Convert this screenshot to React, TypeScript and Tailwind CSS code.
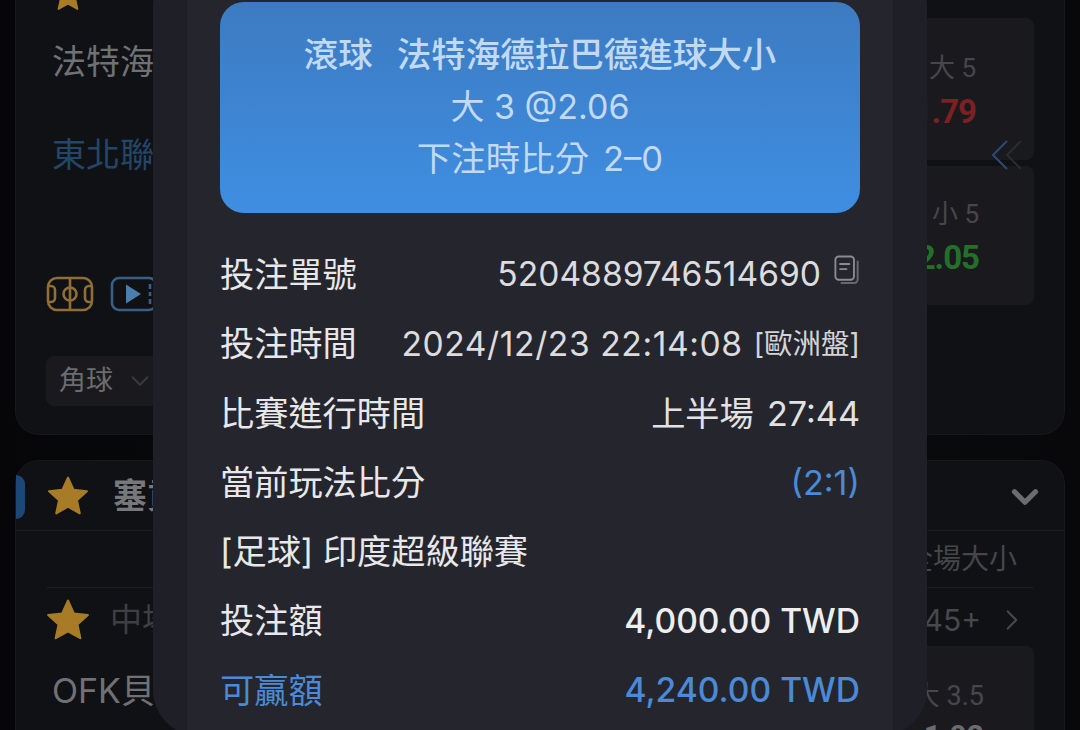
import { ChevronDown, ChevronRight } from 'lucide-react'

const cjk = { fontFamily: 'Inter, "Noto Sans CJK TC", sans-serif' }

const Star = ({ className }: { className: string }) => (
  <svg viewBox="0 0 24 24" className={className} fill="#a87c27">
    <path d="M12 1.500l3.200 7 7.600.8-5.700 5.100 1.600 7.500L12 18.100l-6.700 3.800 1.600-7.500L1.200 9.300l7.600-.8z" strokeLinejoin="round" stroke="#a87c27" strokeWidth="1.200" />
  </svg>
)

const PitchIcon = () => (
  <svg viewBox="0 0 48 36" className="w-[48px] h-[36px]" fill="none" stroke="#8f6e37" strokeWidth="2.600">
    <rect x="2" y="2" width="44" height="32" rx="9" />
    <path d="M24 2v32" />
    <circle cx="24" cy="18" r="6.500" />
    <path d="M2 10h3a4 4 0 0 1 4 4v8a4 4 0 0 1-4 4H2M46 10h-3a4 4 0 0 0-4 4v8a4 4 0 0 0 4 4h3" />
  </svg>
)

const VideoIcon = () => (
  <svg viewBox="0 0 48 36" className="w-[48px] h-[36px]" fill="none" stroke="#3a5f86" strokeWidth="2.600">
    <rect x="2" y="2" width="44" height="32" rx="7" />
    <path d="M40 8v5M40 16v4M40 23v5" />
    <path d="M16 8.500l15 9.500-15 9.500z" fill="#4a7eae" stroke="none" />
  </svg>
)

const CopyIcon = () => (
  <svg viewBox="0 0 28 32" className="w-[26px] h-[30px]" fill="none" strokeLinecap="round">
    <rect x="1.500" y="1.500" width="20" height="25" rx="3.500" stroke="#8b8c92" strokeWidth="2" />
    <path d="M6.500 9.500h10M6.500 15h7" stroke="#8b8c92" strokeWidth="2" />
    <path d="M25.500 7v19a4 4 0 0 1-4 4H8" stroke="#66676d" strokeWidth="2.200" />
  </svg>
)

const DoubleChevron = () => (
  <svg viewBox="0 0 30 30" className="absolute right-[12px] top-[140px] w-[30px] h-[30px]" fill="none" strokeWidth="2">
    <path d="M15 1L1 15l14 14" stroke="#2c4a74" />
    <path d="M29 1L15 15l14 14" stroke="#2a2c33" />
  </svg>
)

const Cell = ({ label, odds, color, h, pr, pt }: { label: string; odds: string; color: string; h: string; pr: string; pt: string }) => (
  <div className={`w-[150px] ${h} rounded-lg bg-[#1a1a1e] flex flex-col items-end ${pt} ${pr}`} style={{ fontFamily: 'Roboto, "Noto Sans CJK TC", sans-serif' }}>
    <span className="text-[26px] leading-[36px] text-[#47474b]">{label}</span>
    <span className={`text-[33px] leading-[51px] tracking-[-1px] font-bold ${color}`}>{odds}</span>
  </div>
)

const Row = ({ left, right, color = 'text-[#e8e8ea]' }: { left: string; right: React.ReactNode; color?: string }) => (
  <div className={`h-[69.300px] flex items-center justify-between text-[34.200px] ${color}`}>
    <span className="whitespace-nowrap">{left}</span>
    <span className="flex items-center whitespace-nowrap">{right}</span>
  </div>
)

export default function App() {
  return (
    <div className="relative w-[1080px] h-[730px] overflow-hidden bg-gradient-to-r from-[#060608] via-[#0d0e12] to-[#08080a]" style={cjk}>
      {/* Dimmed page behind the dialog */}
      <div className="px-[15px] flex flex-col gap-[25px]">
        <div className="h-[435px] rounded-b-[24px] border border-t-0 border-[#17181c] bg-[#101115] flex justify-between px-[30px] overflow-hidden">
          <div className="flex flex-col items-start">
            <Star className="w-[34px] h-[34px] -mt-[22px] ml-[5px]" />
            <div className="mt-[28px] pl-[6px] text-[34px] leading-[44px] text-[#707174] whitespace-nowrap">法特海</div>
            <div className="mt-[49px] pl-[6px] text-[34px] leading-[44px] text-[#234668] whitespace-nowrap">東北聯</div>
            <div className="mt-[99px] flex gap-[16px]">
              <PitchIcon />
              <VideoIcon />
            </div>
            <div className="mt-[44px] h-[50px] w-[150px] rounded-lg bg-[#1a1a1e] flex items-center gap-[12px] pl-[13px] text-[27px] text-[#6b6c6f]">
              角球
              <ChevronDown className="w-[30px] h-[30px] text-[#3a3b3f]" strokeWidth={1.500} />
            </div>
          </div>
          <div className="relative pt-[18px] flex flex-col gap-[6px]">
            <Cell label="大 5" odds="1.79" color="text-[#7c2022]" h="h-[142px]" pr="pr-[58px]" pt="pt-[32px]" />
            <Cell label="小 5" odds="2.05" color="text-[#23702a]" h="h-[139px]" pr="pr-[55px]" pt="pt-[30px]" />
            <DoubleChevron />
          </div>
        </div>

        <div className="relative h-[300px] rounded-t-[24px] border border-b-0 border-[#17181c] bg-[#101115]">
          <div className="absolute left-0 top-[14px] w-[9px] h-[44px] rounded-r-[9px] bg-[#1c4878]" />
          <div className="h-[70px] flex items-center justify-between border-b border-[#1b1c21] pl-[31px] pr-[18px]">
            <div className="flex items-center gap-[24px]">
              <Star className="w-[42px] h-[42px]" />
              <span className="text-[34px] font-bold text-[#77787b]">塞貢</span>
            </div>
            <ChevronDown className="w-[42px] h-[42px] text-[#6b6c70] mt-[3px]" strokeWidth={3} />
          </div>
          <div className="h-[57px] mx-[30px] flex items-center justify-end pr-[17px] border-b border-[#1b1c21] text-[28px] text-[#454649]">全場大小</div>
          <div className="flex items-center justify-between mx-[30px] h-[58px] pt-[6px]">
            <div className="flex items-center gap-[20px]">
              <Star className="w-[44px] h-[44px]" />
              <span className="text-[32px] text-[#3e3f42]">中場</span>
            </div>
            <div className="flex items-center gap-[14px] pr-[5px] text-[30px] text-[#47484b]">
              45+
              <ChevronRight className="w-[34px] h-[34px]" strokeWidth={1.500} />
            </div>
          </div>
          <div className="flex justify-between mx-[30px]">
            <div className="pl-[6px] mt-[19px] text-[34px] text-[#707174]">OFK貝</div>
            <div className="w-[150px] h-[120px] rounded-lg bg-[#1a1a1e] pr-[50px] pt-[32px] flex flex-col items-end text-[#47474b]" style={{ fontFamily: 'Roboto, "Noto Sans CJK TC", sans-serif' }}>
              <span className="text-[27px] leading-[36px]">大 3.5</span>
              <span className="text-[30px] leading-[44px] font-bold text-[#6c6c70]">1.92</span>
            </div>
          </div>
        </div>
      </div>

      {/* Bet receipt dialog */}
      <div className="absolute left-[153px] top-[-40px] w-[774px] h-[776px] rounded-[46px] bg-[#1e1f27] px-[34px] overflow-hidden">
        <div className="h-full bg-[#25262d] px-[33px] pt-[42px]">
          <div className="h-[211px] rounded-[24px] bg-gradient-to-b from-[#3c7bc1] to-[#3f8ee2] flex flex-col items-center pt-[27px] text-[34.500px] leading-[52px] text-[#c2d9f2]">
            <div className="font-medium flex gap-[24px] whitespace-nowrap">
              <span>滾球</span>
              <span>法特海德拉巴德進球大小</span>
            </div>
            <div className="whitespace-pre text-[34px]">大 3 @2.06</div>
            <div className="whitespace-pre [word-spacing:4px]">下注時比分 2–0</div>
          </div>
          <div className="mt-[27px]">
            <Row
              left="投注單號"
              right={
                <>
                  <span className="text-[33.600px] text-[#dcdcdf]">5204889746514690</span>
                  <span className="ml-[13px] -mt-[10px]"><CopyIcon /></span>
                </>
              }
            />
            <Row
              left="投注時間"
              right={
                <>
                  <span className="text-[33.600px] tracking-[0.6px] text-[#dcdcdf]">2024/12/23 22:14:08</span>
                  <span className="ml-[11px] text-[28.500px] text-[#d4d4d7]">[歐洲盤]</span>
                </>
              }
            />
            <Row left="比賽進行時間" right={<span className="whitespace-pre text-[#e2e2e5] [word-spacing:-3px]">上半場  27:44</span>} />
            <Row left="當前玩法比分" right={<span className="text-[#4a8ad6]">(2:1)</span>} />
            <Row left="[足球] 印度超級聯賽" right="" />
            <Row left="投注額" right={<span className="font-medium text-[#eeeef0] text-[33.600px]">4,000.00 TWD</span>} />
            <Row left="可贏額" right={<span className="font-medium text-[33.600px]">4,240.00 TWD</span>} color="text-[#4a8ad6]" />
          </div>
        </div>
      </div>
    </div>
  )
}
